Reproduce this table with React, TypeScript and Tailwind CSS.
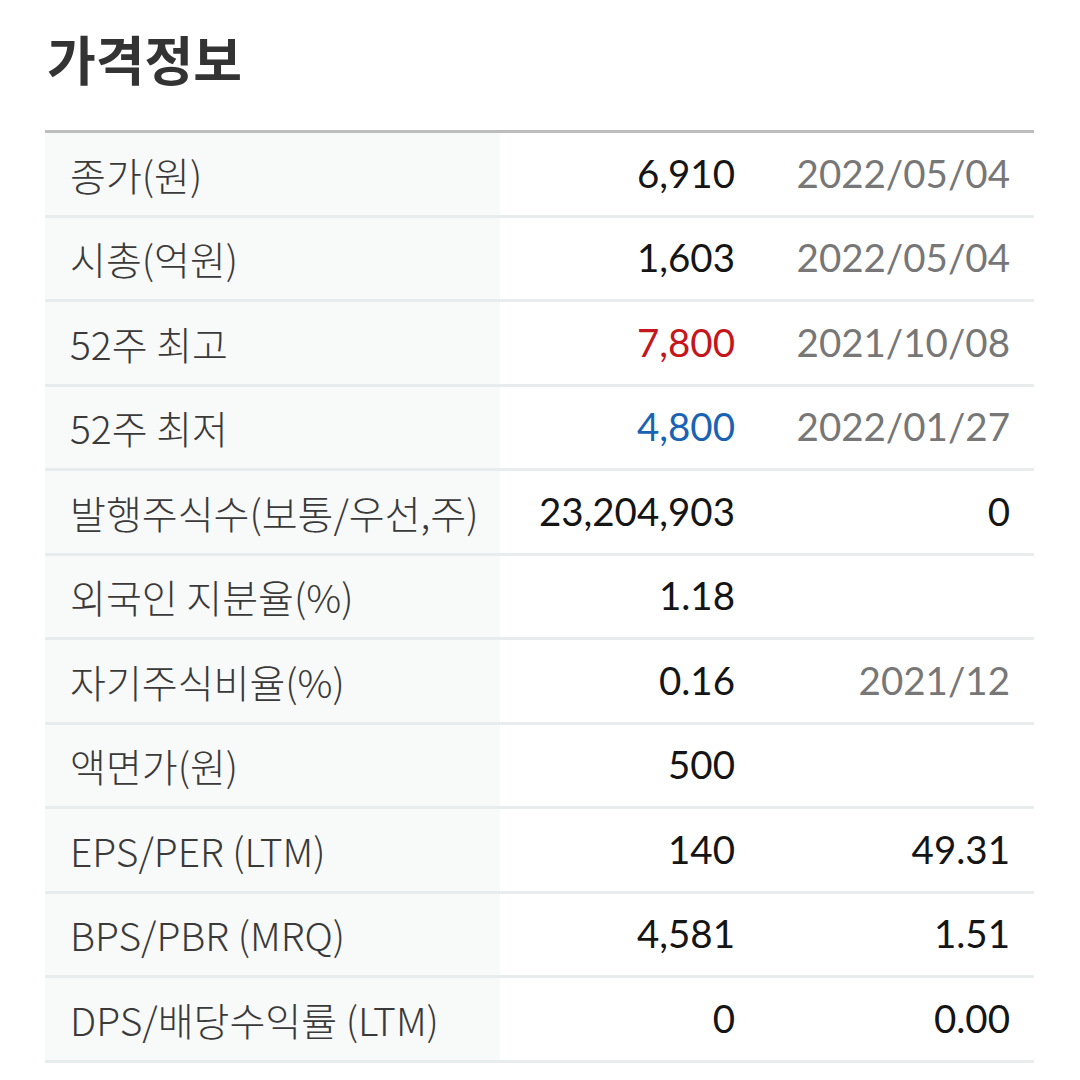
const rows: { label: string; value: string; extra: string; tone?: "up" | "down" }[] = [
  { label: "종가(원)", value: "6,910", extra: "2022/05/04" },
  { label: "시총(억원)", value: "1,603", extra: "2022/05/04" },
  { label: "52주 최고", value: "7,800", extra: "2021/10/08", tone: "up" },
  { label: "52주 최저", value: "4,800", extra: "2022/01/27", tone: "down" },
  { label: "발행주식수(보통/우선,주)", value: "23,204,903", extra: "0" },
  { label: "외국인 지분율(%)", value: "1.18", extra: "" },
  { label: "자기주식비율(%)", value: "0.16", extra: "2021/12" },
  { label: "액면가(원)", value: "500", extra: "" },
  { label: "EPS/PER (LTM)", value: "140", extra: "49.31" },
  { label: "BPS/PBR (MRQ)", value: "4,581", extra: "1.51" },
  { label: "DPS/배당수익률 (LTM)", value: "0", extra: "0.00" },
];

export default function App() {
  return (
    <div className="min-h-[1080px] w-[1080px] bg-white px-[45px] pt-[26px] font-['Lato','Noto_Sans_CJK_KR',sans-serif]">
      <h1 className="pl-[2px] font-['Noto_Sans_CJK_KR',sans-serif] text-[53px] font-bold leading-[64px] text-[#333]">
        가격정보
      </h1>
      <div className="mt-[40px] w-[989px] border-t-[3px] border-[#bdbdbd]">
        {rows.map((r) => (
          <div
            key={r.label}
            className="grid h-[84.5px] grid-cols-[455px_260px_1fr] border-b-[3px] border-[#e8eced] text-[38.5px]"
          >
            <div className="flex items-center bg-[#f8f9f9] pl-[25px] font-['Noto_Sans_CJK_KR',sans-serif] text-[39px] font-light text-[#3a3a3a]">
              {r.label}
            </div>
            <div
              className={
                "flex items-center justify-end pr-[25px] " +
                (r.tone === "up" ? "text-[#c4161c]" : r.tone === "down" ? "text-[#1a63b4]" : "text-[#151515]")
              }
            >
              {r.value}
            </div>
            <div className={"flex items-center justify-end pr-[24px] " + (r.extra === "0" || /^\d+\.\d+$/.test(r.extra) ? "text-[#151515]" : "text-[#777]")}>
              {r.extra}
            </div>
          </div>
        ))}
      </div>
    </div>
  );
}
